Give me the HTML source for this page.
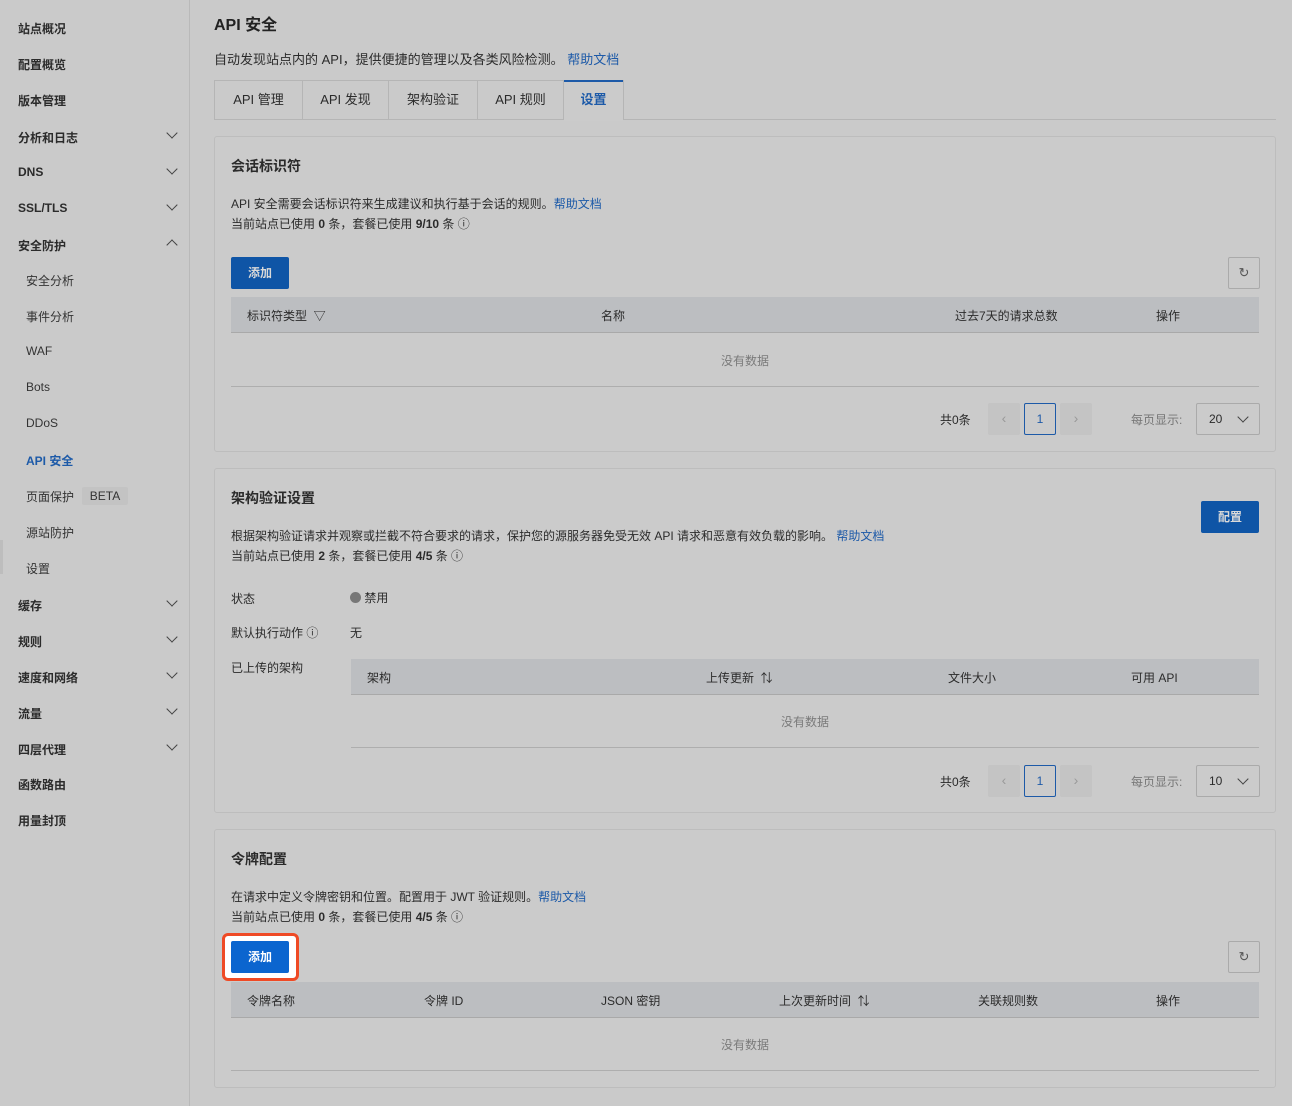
<!DOCTYPE html>
<html><head><meta charset="utf-8">
<style>
*{box-sizing:border-box;margin:0;padding:0}
body{width:1292px;height:1106px;background:#cacaca;font-family:"Liberation Sans","Noto Sans CJK SC",sans-serif;color:#2b2b2b;font-size:12px;position:relative;overflow:hidden}
.a{position:absolute;white-space:nowrap}
.side{left:0;top:0;width:190px;height:1106px;border-right:1px solid #b9b9b9}
.nav{left:18px;font-size:12px;font-weight:bold;color:#2b2b2b}
.sub{left:26px;font-size:12px;color:#333}
.chev{position:absolute;left:168px;width:8px;height:8px;border-right:1.5px solid #444;border-bottom:1.5px solid #444;transform:rotate(45deg)}
.chev.up{transform:rotate(225deg)}
.card{position:absolute;left:214px;width:1062px;border:1px solid #bdbdbd;border-radius:3px;background:#cbcbcb}
.th{position:absolute;background:#bcbec1;height:36px;border-bottom:1px solid #a9a9a9}
.th span{position:absolute;top:10px;font-size:12px;color:#2b2b2b}
.line{position:absolute;height:1px;background:#aeaeae}
.nodata{position:absolute;font-size:12px;color:#7a7a7a}
.btn{position:absolute;background:#0f55a6;color:#d9d9d9;font-weight:bold;font-size:12px;text-align:center;border-radius:2px}
.link{color:#1d5aa8}
.pg{position:absolute;width:32px;height:32px;border-radius:2px;background:#c4c4c4;color:#999;text-align:center;line-height:30px;font-size:14px}
.pg1{position:absolute;width:32px;height:32px;border:1px solid #1d5aa8;border-radius:2px;text-align:center;line-height:30px;color:#1d5aa8;font-size:12px}
.sel{position:absolute;width:64px;height:32px;border:1px solid #aaa;border-radius:2px;font-size:12px;line-height:30px;padding-left:12px}
.sel:after{content:"";position:absolute;right:12px;top:9px;width:7px;height:7px;border-right:1.5px solid #444;border-bottom:1.5px solid #444;transform:rotate(45deg)}
.ref{position:absolute;width:32px;height:32px;border:1px solid #aaa;border-radius:2px;text-align:center;line-height:30px;font-size:13px;color:#555}
</style></head><body>
<div class="a side"></div>
<div class="a" style="left:0;top:540px;width:3px;height:34px;background:#bdbdbd"></div>
<div class="a nav" style="top:20px">站点概况</div>
<div class="a nav" style="top:56px">配置概览</div>
<div class="a nav" style="top:92px">版本管理</div>
<div class="a nav" style="top:129px">分析和日志</div><i class="chev" style="top:129px"></i>
<div class="a nav" style="top:165px">DNS</div><i class="chev" style="top:165px"></i>
<div class="a nav" style="top:201px">SSL/TLS</div><i class="chev" style="top:201px"></i>
<div class="a nav" style="top:237px">安全防护</div><i class="chev up" style="top:241px"></i>
<div class="a sub" style="top:272px">安全分析</div>
<div class="a sub" style="top:308px">事件分析</div>
<div class="a sub" style="top:344px">WAF</div>
<div class="a sub" style="top:380px">Bots</div>
<div class="a sub" style="top:416px">DDoS</div>
<div class="a sub" style="top:452px;color:#1d5aa8;font-weight:bold">API 安全</div>
<div class="a sub" style="top:488px">页面保护</div>
<div class="a" style="left:82px;top:487px;width:46px;height:18px;background:#c3c3c3;border-radius:2px;font-size:12px;line-height:18px;text-align:center;color:#333">BETA</div>
<div class="a sub" style="top:524px">源站防护</div>
<div class="a sub" style="top:560px">设置</div>
<div class="a nav" style="top:597px">缓存</div><i class="chev" style="top:597px"></i>
<div class="a nav" style="top:633px">规则</div><i class="chev" style="top:633px"></i>
<div class="a nav" style="top:669px">速度和网络</div><i class="chev" style="top:669px"></i>
<div class="a nav" style="top:705px">流量</div><i class="chev" style="top:705px"></i>
<div class="a nav" style="top:741px">四层代理</div><i class="chev" style="top:741px"></i>
<div class="a nav" style="top:776px">函数路由</div>
<div class="a nav" style="top:812px">用量封顶</div>

<div class="a" style="left:214px;top:11px;font-size:16px;font-weight:bold;color:#222">API 安全</div>
<div class="a" style="left:214px;top:49px;font-size:13px">自动发现站点内的 API，提供便捷的管理以及各类风险检测。 <span class="link">帮助文档</span></div>
<div class="a" style="left:214px;top:119px;width:1062px;height:1px;background:#b5b5b5"></div>
<div class="a" style="left:214px;top:80px;width:410px;height:40px;border:1px solid #b5b5b5;border-bottom:none;display:flex;font-size:13px">
<div style="width:88px;line-height:38px;text-align:center;border-right:1px solid #b5b5b5">API 管理</div>
<div style="width:86px;line-height:38px;text-align:center;border-right:1px solid #b5b5b5">API 发现</div>
<div style="width:89px;line-height:38px;text-align:center;border-right:1px solid #b5b5b5">架构验证</div>
<div style="width:86px;line-height:38px;text-align:center;border-right:1px solid #b5b5b5">API 规则</div>
<div style="flex:1;line-height:36px;text-align:center;color:#1d5aa8;font-weight:bold;border-top:2px solid #1d5aa8;background:#cbcbcb;margin-top:-1px;height:41px">设置</div>
</div>

<div class="card" style="top:136px;height:316px">
<div class="a" style="left:16px;top:19px;font-size:14px;font-weight:bold">会话标识符</div>
<div class="a" style="left:16px;top:58px">API 安全需要会话标识符来生成建议和执行基于会话的规则。<span class="link">帮助文档</span></div>
<div class="a" style="left:16px;top:78px">当前站点已使用 <b>0</b> 条，套餐已使用 <b>9/10</b> 条 ⓘ</div>
<div class="btn" style="left:16px;top:120px;width:58px;height:32px;line-height:32px">添加</div>
<div class="ref" style="left:1013px;top:120px">↻</div>
<div class="th" style="left:16px;top:160px;width:1028px"><span style="left:16px">标识符类型 &nbsp;▽</span><span style="left:370px">名称</span><span style="left:724px">过去7天的请求总数</span><span style="left:925px">操作</span></div>
<div class="nodata" style="left:506px;top:215px">没有数据</div>
<div class="line" style="left:16px;top:249px;width:1028px"></div>
<div class="a" style="left:725px;top:274px">共0条</div>
<div class="pg" style="left:773px;top:266px">‹</div><div class="pg1" style="left:809px;top:266px">1</div><div class="pg" style="left:845px;top:266px">›</div>
<div class="a" style="left:916px;top:274px;color:#777">每页显示:</div>
<div class="sel" style="left:981px;top:266px">20</div>
</div>

<div class="card" style="top:468px;height:345px">
<div class="a" style="left:16px;top:19px;font-size:14px;font-weight:bold">架构验证设置</div>
<div class="btn" style="left:986px;top:32px;width:58px;height:32px;line-height:32px">配置</div>
<div class="a" style="left:16px;top:58px">根据架构验证请求并观察或拦截不符合要求的请求，保护您的源服务器免受无效 API 请求和恶意有效负载的影响。 <span class="link">帮助文档</span></div>
<div class="a" style="left:16px;top:78px">当前站点已使用 <b>2</b> 条，套餐已使用 <b>4/5</b> 条 ⓘ</div>
<div class="a" style="left:16px;top:121px">状态</div>
<div class="a" style="left:135px;top:120px"><span style="display:inline-block;width:11px;height:11px;border-radius:50%;background:#777;vertical-align:-1px"></span> 禁用</div>
<div class="a" style="left:16px;top:155px">默认执行动作 ⓘ</div>
<div class="a" style="left:135px;top:155px">无</div>
<div class="a" style="left:16px;top:190px">已上传的架构</div>
<div class="th" style="left:136px;top:190px;width:908px"><span style="left:16px">架构</span><span style="left:355px">上传更新 &nbsp;⇅</span><span style="left:597px">文件大小</span><span style="left:780px">可用 API</span></div>
<div class="nodata" style="left:566px;top:244px">没有数据</div>
<div class="line" style="left:136px;top:278px;width:908px"></div>
<div class="a" style="left:725px;top:304px">共0条</div>
<div class="pg" style="left:773px;top:296px">‹</div><div class="pg1" style="left:809px;top:296px">1</div><div class="pg" style="left:845px;top:296px">›</div>
<div class="a" style="left:916px;top:304px;color:#777">每页显示:</div>
<div class="sel" style="left:981px;top:296px">10</div>
</div>

<div class="card" style="top:829px;height:259px">
<div class="a" style="left:16px;top:19px;font-size:14px;font-weight:bold">令牌配置</div>
<div class="a" style="left:16px;top:58px">在请求中定义令牌密钥和位置。配置用于 JWT 验证规则。<span class="link">帮助文档</span></div>
<div class="a" style="left:16px;top:78px">当前站点已使用 <b>0</b> 条，套餐已使用 <b>4/5</b> 条 ⓘ</div>
<div class="ref" style="left:1013px;top:111px">↻</div>
<div class="th" style="left:16px;top:152px;width:1028px"><span style="left:16px">令牌名称</span><span style="left:193px">令牌 ID</span><span style="left:370px">JSON 密钥</span><span style="left:548px">上次更新时间 &nbsp;⇅</span><span style="left:747px">关联规则数</span><span style="left:925px">操作</span></div>
<div class="nodata" style="left:506px;top:206px">没有数据</div>
<div class="line" style="left:16px;top:240px;width:1028px"></div>
</div>
<div class="a" style="left:222px;top:933px;width:77px;height:48px;border:3px solid #ef4a25;border-radius:6px;background:#fff"></div>
<div class="a" style="left:231px;top:941px;width:58px;height:32px;background:#0b65cf;color:#fff;font-weight:bold;font-size:12px;text-align:center;line-height:32px;border-radius:2px">添加</div>
</body></html>
